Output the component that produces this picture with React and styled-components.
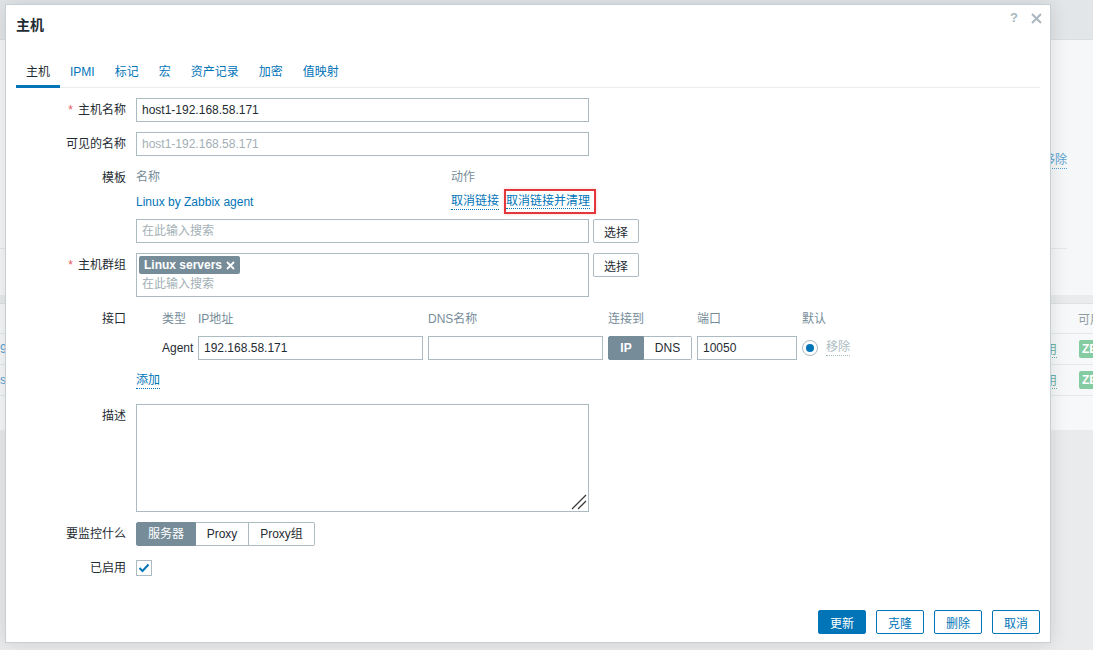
import React from 'react'
import styled, { createGlobalStyle } from 'styled-components'

const GlobalStyle = createGlobalStyle`
  html, body {
    margin: 0;
    padding: 0;
  }
  body {
    font-family: "Liberation Sans", "Noto Sans CJK SC", Arial, sans-serif;
    font-size: 12px;
    color: #1f2c33;
    background: #e9ebed;
  }
  * {
    box-sizing: border-box;
  }
`

/* ---------- dimmed page behind the dialog ---------- */

const Page = styled.div`
  position: relative;
  width: 1093px;
  height: 650px;
  overflow: hidden;
  display: flex;
  flex-direction: column;
  background: #e9ebed;
`

const TopBar = styled.div`
  flex: none;
  height: 40px;
  background: #e3e6e8;
  border-bottom: 1px solid #d9dee1;
`

const BgPanel = styled.div`
  flex: none;
  height: 255px;
  background: #f6f7f8;
  display: flex;
  flex-direction: column;
  align-items: flex-end;
  padding-right: 26px;
`

const BgLink = styled.span`
  margin-top: 112px;
  line-height: 16px;
  color: #5ba3d3;
  border-bottom: 1px dotted #5ba3d3;
`

const BgRule = styled.div`
  margin-top: auto;
  margin-bottom: 46px;
  width: 100%;
  border-top: 1px solid #e6e8ea;
`

const BgTable = styled.div`
  flex: none;
  margin-top: 8px;
  height: 127px;
  background: #f7f8f9;
  border-top: 1px solid #dde1e4;
`

const BgRow = styled.div`
  height: ${p => (p.$head ? 30 : 31)}px;
  display: flex;
  align-items: center;
  justify-content: space-between;
  white-space: nowrap;
  border-bottom: 1px solid #e4e7e9;
  color: ${p => (p.$head ? '#8f9ca3' : '#5ba3d3')};
`

const BgCells = styled.div`
  display: flex;
  align-items: center;
  gap: 22px;
`

const BgUse = styled.span`
  width: 24px;
  border-bottom: 1px dotted #6ab0a0;
  color: #6ab0a0;
`

const BgBadge = styled.span`
  width: 30px;
  height: 18px;
  line-height: 18px;
  padding-left: 3px;
  border-radius: 2px;
  background: #86cca2;
  color: #fff;
  font-weight: bold;
  margin-right: -16px;
`

const BgHeadText = styled.span`
  margin-right: -9px;
`

/* ---------- dialog ---------- */

const Modal = styled.div`
  position: absolute;
  left: 5px;
  top: 4px;
  width: 1046px;
  height: 639px;
  background: #fff;
  border: 1px solid #c5cfd4;
  box-shadow: 0 0 18px rgba(0, 0, 0, 0.12);
  display: flex;
  flex-direction: column;
`

const Header = styled.div`
  display: flex;
  justify-content: space-between;
  align-items: flex-start;
  padding: 0 8px 0 10px;
`

const Title = styled.h4`
  margin: 12px 0 0;
  font-size: 14px;
  line-height: 16px;
  font-weight: bold;
  color: #1f2c33;
`

const HeadIcons = styled.div`
  display: flex;
  align-items: center;
  gap: 13px;
  margin-top: 8px;
  height: 10px;
  color: #a9b7be;
`

const Help = styled.span`
  font-size: 13px;
  font-weight: bold;
  line-height: 10px;
`

const Body = styled.div`
  padding: 0 10px;
`

const TabList = styled.div`
  display: flex;
  margin-top: 26px;
  border-bottom: 1px solid #ebeef0;
`

const Tab = styled.span`
  padding: 6px 10px;
  line-height: 14px;
  margin-bottom: -1px;
  border-bottom: 3px solid ${p => (p.$active ? '#0275b8' : 'transparent')};
  color: ${p => (p.$active ? '#1f2c33' : '#0275b8')};
`

const Form = styled.div`
  margin-top: 10px;
  display: flex;
  flex-direction: column;
  gap: 10px;
`

const Row = styled.div`
  display: grid;
  grid-template-columns: 110px 453px;
  column-gap: 10px;
`

const Label = styled.div`
  text-align: right;
  padding-top: 4px;
  line-height: 16px;
  white-space: nowrap;
`

const Req = styled.span`
  color: #e45959;
  margin-right: 5px;
`

const Field = styled.div`
  display: flex;
  flex-direction: column;
`

const Line = styled.div`
  display: flex;
  align-items: flex-start;
  gap: 4px;
  margin-top: ${p => p.$mt || 0}px;
`

const Input = styled.input`
  width: ${p => p.$w || 453}px;
  height: 24px;
  flex: none;
  padding: 0 5px;
  border: 1px solid #acbbc2;
  border-radius: 0;
  font-family: inherit;
  font-size: 12px;
  color: #1f2c33;
  background: #fff;
  outline: none;
  &::placeholder {
    color: #a3afb5;
  }
`

const Button = styled.button`
  height: 24px;
  flex: none;
  padding: 0 10px;
  border: 1px solid #acbbc2;
  border-radius: 2px;
  background: #fff;
  font-family: inherit;
  font-size: 12px;
  color: #1f2c33;
`

const ColHead = styled.div`
  color: #768d99;
  line-height: ${p => p.$h || 22}px;
`

const TemplateGrid = styled.div`
  display: grid;
  grid-template-columns: 315px auto;
`

const Cell = styled.div`
  display: flex;
  align-items: center;
  gap: 7px;
  height: 26px;
  padding-top: 1px;
  white-space: nowrap;
`

const PlainLink = styled.span`
  color: #0275b8;
  line-height: 16px;
`

const Link = styled.span`
  color: #0275b8;
  line-height: 15px;
  border-bottom: 1px dotted #0275b8;
  white-space: nowrap;
`

const Highlight = styled.span`
  display: inline-block;
  line-height: 16px;
  padding: 2px 4px 3px 0;
  outline: 2px solid #e3373c;
  box-shadow: 0 0 3px 2px rgba(227, 55, 60, 0.25);
`

const MultiSelect = styled.div`
  width: 453px;
  height: 44px;
  flex: none;
  border: 1px solid #acbbc2;
  padding: 2px;
  display: flex;
  flex-direction: column;
  align-items: flex-start;
`

const Chip = styled.span`
  display: inline-flex;
  align-items: center;
  gap: 4px;
  height: 18px;
  padding: 0 5px;
  border-radius: 2px;
  background: #768d99;
  color: #fff;
  font-weight: bold;
`

const Placeholder = styled.span`
  margin-top: 2px;
  padding-left: 3px;
  line-height: 16px;
  color: #a3afb5;
`

const IfaceGrid = styled.div`
  margin-left: 26px;
  display: grid;
  grid-template-columns: 31px 225px 175px 84px 100px auto;
  grid-template-rows: 24px 24px;
  column-gap: 5px;
  row-gap: 5px;
  align-items: center;
  white-space: nowrap;
`

const Segmented = styled.div`
  display: flex;
  height: 24px;
`

const Seg = styled.span`
  width: ${p => p.$w}px;
  height: 24px;
  display: flex;
  align-items: center;
  justify-content: center;
  line-height: 14px;
  border: 1px solid ${p => (p.$on ? '#768d99' : '#acbbc2')};
  background: ${p => (p.$on ? '#768d99' : '#fff')};
  color: ${p => (p.$on ? '#fff' : '#1f2c33')};
  font-weight: ${p => (p.$bold ? 'bold' : 'normal')};
  & + & {
    border-left: none;
  }
  &:first-child {
    border-radius: 2px 0 0 2px;
  }
  &:last-child {
    border-radius: 0 2px 2px 0;
  }
`

const DefaultCell = styled.div`
  display: flex;
  align-items: center;
  gap: 8px;
`

const Radio = styled.span`
  width: 16px;
  height: 16px;
  border-radius: 50%;
  border: 1px solid #acbbc2;
  display: flex;
  align-items: center;
  justify-content: center;
  &::after {
    content: '';
    width: 8px;
    height: 8px;
    border-radius: 50%;
    background: #0275b8;
  }
`

const MutedLink = styled.span`
  color: #acbbc2;
  line-height: 15px;
  border-bottom: 1px dotted #acbbc2;
`

const AddRow = styled.div`
  height: 24px;
  padding-top: 3px;
  margin-top: 10px;
  display: flex;
  align-items: flex-start;
`

const AreaWrap = styled.div`
  position: relative;
  width: 453px;
  height: 108px;
`

const TextArea = styled.textarea`
  display: block;
  width: 453px;
  height: 108px;
  border: 1px solid #acbbc2;
  border-radius: 0;
  resize: none;
  font-family: inherit;
  font-size: 12px;
  outline: none;
`

const Grip = styled.svg`
  position: absolute;
  right: 2px;
  bottom: 2px;
  pointer-events: none;
`

const CheckRow = styled.div`
  height: 24px;
  display: flex;
  align-items: center;
`

const Checkbox = styled.span`
  width: 16px;
  height: 16px;
  border: 1px solid #acbbc2;
  display: flex;
  align-items: center;
  justify-content: center;
`

const Footer = styled.div`
  margin-top: auto;
  padding: 0 10px 8px;
  display: flex;
  justify-content: flex-end;
  gap: 10px;
`

const ActionButton = styled.button`
  height: 24px;
  padding: 0 11px;
  border: 1px solid #0275b8;
  border-radius: 2px;
  background: ${p => (p.$primary ? '#0275b8' : '#fff')};
  color: ${p => (p.$primary ? '#fff' : '#0275b8')};
  font-family: inherit;
  font-size: 12px;
`

const tabs = ['主机', 'IPMI', '标记', '宏', '资产记录', '加密', '值映射']

export default function App() {
  return (
    <>
      <GlobalStyle />
      <Page>
        <TopBar />
        <BgPanel>
          <BgLink>移除</BgLink>
          <BgRule />
        </BgPanel>
        <BgTable>
          <BgRow $head>
            <span />
            <BgHeadText>可用</BgHeadText>
          </BgRow>
          <BgRow>
            <span>9</span>
            <BgCells>
              <BgUse>启用</BgUse>
              <BgBadge>ZBX</BgBadge>
            </BgCells>
          </BgRow>
          <BgRow>
            <span>s</span>
            <BgCells>
              <BgUse>启用</BgUse>
              <BgBadge>ZBX</BgBadge>
            </BgCells>
          </BgRow>
        </BgTable>

        <Modal>
          <Header>
            <Title>主机</Title>
            <HeadIcons>
              <Help>?</Help>
              <svg width="11" height="11" viewBox="0 0 11 11">
                <path d="M1 1 L10 10 M10 1 L1 10" stroke="#a9b7be" strokeWidth="2" />
              </svg>
            </HeadIcons>
          </Header>

          <Body>
            <TabList>
              {tabs.map((t, i) => (
                <Tab key={t} $active={i === 0}>{t}</Tab>
              ))}
            </TabList>

            <Form>
              <Row>
                <Label><Req>*</Req>主机名称</Label>
                <Field>
                  <Input defaultValue="host1-192.168.58.171" />
                </Field>
              </Row>

              <Row>
                <Label>可见的名称</Label>
                <Field>
                  <Input placeholder="host1-192.168.58.171" />
                </Field>
              </Row>

              <Row>
                <Label>模板</Label>
                <Field>
                  <TemplateGrid>
                    <ColHead>名称</ColHead>
                    <ColHead>动作</ColHead>
                    <Cell><PlainLink>Linux by Zabbix agent</PlainLink></Cell>
                    <Cell>
                      <Link>取消链接</Link>
                      <Highlight><Link>取消链接并清理</Link></Highlight>
                    </Cell>
                  </TemplateGrid>
                  <Line $mt={5}>
                    <Input placeholder="在此输入搜索" />
                    <Button>选择</Button>
                  </Line>
                </Field>
              </Row>

              <Row>
                <Label><Req>*</Req>主机群组</Label>
                <Line>
                  <MultiSelect>
                    <Chip>
                      Linux servers
                      <svg width="9" height="9" viewBox="0 0 9 9">
                        <path d="M1 1 L8 8 M8 1 L1 8" stroke="#fff" strokeWidth="1.8" />
                      </svg>
                    </Chip>
                    <Placeholder>在此输入搜索</Placeholder>
                  </MultiSelect>
                  <Button>选择</Button>
                </Line>
              </Row>

              <Row>
                <Label>接口</Label>
                <Field>
                  <IfaceGrid>
                    <ColHead $h={24}>类型</ColHead>
                    <ColHead $h={24}>IP地址</ColHead>
                    <ColHead $h={24}>DNS名称</ColHead>
                    <ColHead $h={24}>连接到</ColHead>
                    <ColHead $h={24}>端口</ColHead>
                    <ColHead $h={24}>默认</ColHead>

                    <span>Agent</span>
                    <Input $w={225} defaultValue="192.168.58.171" />
                    <Input $w={175} defaultValue="" />
                    <Segmented>
                      <Seg $w={36} $on $bold>IP</Seg>
                      <Seg $w={48}>DNS</Seg>
                    </Segmented>
                    <Input $w={100} defaultValue="10050" />
                    <DefaultCell>
                      <Radio />
                      <MutedLink>移除</MutedLink>
                    </DefaultCell>
                  </IfaceGrid>
                  <AddRow>
                    <Link>添加</Link>
                  </AddRow>
                </Field>
              </Row>

              <Row>
                <Label>描述</Label>
                <Field>
                  <AreaWrap>
                    <TextArea />
                    <Grip width="16" height="16" viewBox="0 0 16 16">
                      <path d="M1 15 L15 1 M7 15 L15 7" stroke="#3a3a3a" strokeWidth="1.3" />
                    </Grip>
                  </AreaWrap>
                </Field>
              </Row>

              <Row>
                <Label>要监控什么</Label>
                <Field>
                  <Segmented>
                    <Seg $w={60} $on>服务器</Seg>
                    <Seg $w={53}>Proxy</Seg>
                    <Seg $w={66}>Proxy组</Seg>
                  </Segmented>
                </Field>
              </Row>

              <Row>
                <Label>已启用</Label>
                <CheckRow>
                  <Checkbox>
                    <svg width="12" height="10" viewBox="0 0 12 10">
                      <path d="M1.5 5 L4.5 8 L10.5 1.5" fill="none" stroke="#0275b8" strokeWidth="2" />
                    </svg>
                  </Checkbox>
                </CheckRow>
              </Row>
            </Form>
          </Body>

          <Footer>
            <ActionButton $primary>更新</ActionButton>
            <ActionButton>克隆</ActionButton>
            <ActionButton>删除</ActionButton>
            <ActionButton>取消</ActionButton>
          </Footer>
        </Modal>
      </Page>
    </>
  )
}
